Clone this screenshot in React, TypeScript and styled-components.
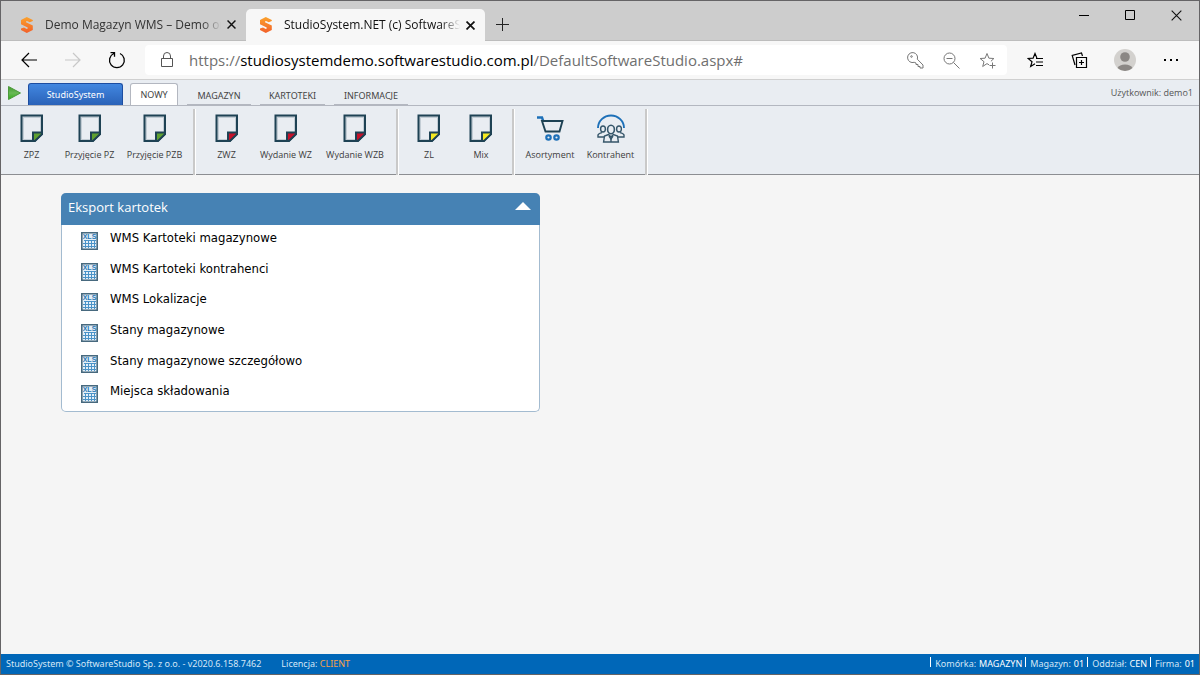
import React from "react";
import styled, { createGlobalStyle, css } from "styled-components";

const uiFont = `"Open Sans", "Noto Sans", sans-serif`;
const wideFont = `"Noto Sans", "Open Sans", sans-serif`;

const GlobalStyle = createGlobalStyle`
  * { box-sizing: border-box; }
  body { margin: 0; background: #f5f5f5; font-family: ${uiFont}; color: #000; }
  button { font: inherit; color: inherit; background: none; border: 0; padding: 0; margin: 0; cursor: pointer; }
  a { color: inherit; text-decoration: none; }
  svg { display: block; flex: none; }
`;

const Window = styled.div`
  min-height: 100vh;
  display: flex;
  flex-direction: column;
  border: 1px solid #656466;
  background: #f5f5f5;
`;

/* Browser chrome */

const TabStrip = styled.header`
  display: flex;
  height: 40px;
  background: #cdcdcd;
  border-bottom: 1px solid #bdbdbd;
`;

const BrowserTab = styled.div<{ $active?: boolean }>`
  display: flex;
  align-items: center;
  width: ${(p) => (p.$active ? 239 : 245)}px;
  padding: 0 7px 0 ${(p) => (p.$active ? 12 : 18)}px;
  font-size: 12px;
  color: #333;
  ${(p) =>
    p.$active
      ? css`
          height: 32px;
          margin: 8px 0 -1px;
          background: #f7f7f7;
          border-radius: 5px 5px 0 0;
          color: #111;
        `
      : css`
          margin-top: 8px;
        `}
`;

const TabTitle = styled.span`
  flex: 1;
  min-width: 0;
  margin-left: 10px;
  overflow: hidden;
  white-space: nowrap;
  line-height: 18px;
  mask-image: linear-gradient(to right, #000 88%, transparent 99%);
`;

const TabClose = styled.button`
  width: 16px;
  height: 16px;
  display: grid;
  place-items: center;
`;

const NewTab = styled.button`
  width: 34px;
  margin-top: 8px;
  display: grid;
  place-items: center;
`;

const WindowButtons = styled.div`
  display: flex;
  margin-left: auto;
`;

const WindowButton = styled.button`
  width: 46px;
  height: 28px;
  display: grid;
  place-items: center;
`;

const NavBar = styled.nav`
  display: flex;
  align-items: center;
  height: 39px;
  padding-right: 6px;
  background: #f7f7f7;
  border-bottom: 1px solid #d0d0d0;
`;

const NavButton = styled.button<{ $w?: number }>`
  width: ${(p) => p.$w ?? 44}px;
  height: 38px;
  display: grid;
  place-items: center;
`;

const AddressBar = styled.div`
  flex: 1;
  min-width: 0;
  display: flex;
  align-items: center;
  height: 30px;
  margin-right: 6px;
  padding: 0 2px 0 15px;
  background: #fff;
  border-radius: 4px;
`;

const Url = styled.div`
  flex: 1;
  min-width: 0;
  margin-left: 15px;
  overflow: hidden;
  white-space: nowrap;
  font-size: 15px;
  line-height: 22px;
  color: #6f6f6f;
  b { font-weight: 400; color: #000; }
`;

/* Application ribbon */

const MenuBar = styled.div`
  display: flex;
  align-items: flex-end;
  height: 26px;
  padding-left: 6px;
  background: #e9edf2;
  border-bottom: 1px solid #b3b7c0;
`;

const RunButton = styled.button`
  align-self: center;
  width: 15px;
  height: 18px;
  margin-right: 6px;
`;

const tabText = css`
  font-family: ${wideFont};
  font-size: 9px;
  line-height: 12px;
  text-align: center;
`;

const BrandTab = styled.button`
  ${tabText}
  width: 95px;
  height: 22px;
  background: linear-gradient(#4287e0, #2a62b8);
  border: 1px solid #1c4da1;
  border-bottom: 0;
  border-radius: 3px 3px 0 0;
  color: #fff;
`;

const MenuTab = styled.button<{ $w: number; $active?: boolean }>`
  ${tabText}
  width: ${(p) => p.$w}px;
  height: 22px;
  margin-left: 7px;
  color: #444;
  ${(p) =>
    p.$active
      ? css`
          background: #fff;
          border: 1px solid #b3b7c0;
          border-bottom: 0;
          border-radius: 3px 3px 0 0;
        `
      : css`
          padding-top: 4px;
          margin-left: 9px;
          border-bottom: 1px solid #b3b7c0;
        `}
`;

const UserInfo = styled.span`
  margin: 0 6px 0 auto;
  align-self: center;
  font-size: 9px;
  line-height: 12px;
  color: #555;
`;

const Ribbon = styled.div`
  display: flex;
  height: 69px;
  padding-top: 3px;
  background: #e9edf2;
`;

const RibbonGroup = styled.div`
  display: flex;
  padding: 0 5px 0 4px;
  border-bottom: 1px solid #8c8e92;
`;

const Separator = styled.div`
  width: 3px;
  background: #c9c9c9;
  border-right: 1px solid #fff;
`;

const RibbonRest = styled.div`
  flex: 1;
  border-bottom: 1px solid #8c8e92;
`;

const RibbonButton = styled.button<{ $w: number }>`
  width: ${(p) => p.$w}px;
  display: flex;
  flex-direction: column;
  align-items: center;
  padding-top: 5px;
  font-size: 9px;
  line-height: 12px;
  color: #3c3c3c;
  white-space: nowrap;
  span { margin-top: 6px; }
`;

/* Content */

const Main = styled.main`
  flex: 1;
  padding: 18px 60px;
`;

const Panel = styled.section`
  width: 40%;
  min-width: 479px;
  background: #fff;
  border: 1px solid #a3bbd0;
  border-top: 0;
  border-radius: 5px;
`;

const PanelHeader = styled.button`
  display: flex;
  justify-content: space-between;
  align-items: center;
  width: calc(100% + 2px);
  height: 32px;
  margin: 0 -1px;
  padding: 0 9px 4px 7px;
  background: #4682b4;
  border-radius: 5px 5px 0 0;
  color: #fff;
  font-size: 13px;
  line-height: 18px;
`;

const LinkList = styled.ul`
  margin: 0;
  padding: 0 0 2px 19px;
  list-style: none;
  display: grid;
  grid-auto-rows: 1fr;
  height: 186px;
`;

const ListLink = styled.a`
  display: flex;
  align-items: flex-start;
  padding-top: 4px;
  gap: 12px;
  font-family: "DejaVu Sans Condensed", "DejaVu Sans", sans-serif;
  font-stretch: condensed;
  font-size: 13px;
  line-height: 18px;
  svg { margin-top: 3px; }
`;

const Footer = styled.footer`
  display: flex;
  align-items: center;
  height: 20px;
  padding: 0 4px 0 5px;
  background: #0067b8;
  color: #d4e6f6;
  font-family: ${wideFont};
  font-size: 9px;
  line-height: 12px;
  white-space: nowrap;
`;

const License = styled.span`
  margin-left: 20px;
  span { color: #f7a04a; }
`;

const Facts = styled.dl`
  display: flex;
  margin: 0 0 0 auto;
`;

const Fact = styled.div`
  display: flex;
  gap: 3px;
  margin-left: 4px;
  padding-left: 4px;
  position: relative;
  &::before {
    content: "";
    position: absolute;
    left: -1px;
    top: -1px;
    height: 10px;
    border-left: 1px solid #fff;
  }
  dd { margin: 0; color: #fff; }
`;

/* Drawings */

const Logo = () => (
  <svg width="16" height="16" viewBox="0 0 16 16" fill="none">
    <defs>
      <linearGradient id="logo" x1="0" y1="0" x2="0" y2="1">
        <stop offset="0" stopColor="#fba22c" />
        <stop offset="1" stopColor="#f2602a" />
      </linearGradient>
    </defs>
    <path
      fill="url(#logo)"
      d="M7.8 0 2 3v4.2l6.7 3.4v1L7.8 12 5 10.4 2 11.6v1.5L7.8 16l6-3V8.600L7 5.300V4.400l1-.5 2.800 1.400 3-1.300V3z"
    />
  </svg>
);

const Cross = ({ size = 9, w = 1.6 }: { size?: number; w?: number }) => (
  <svg width={size} height={size} viewBox="0 0 10 10" stroke="#111" strokeWidth={w}>
    <path d="M.6.6l8.800 8.800M9.400.6.6 9.400" />
  </svg>
);

type NoteProps = { color: string };
const NoteIcon = ({ color }: NoteProps) => (
  <svg width="24" height="29" viewBox="0 0 24 29">
    <path d="M3 3h18v15M3 3v23h10" fill="none" stroke="#c3cdd5" strokeWidth="2" />
    <path d="M1.500 1.500h20.500v18.500L14.500 27H1.500z" fill="none" stroke="#1e4254" strokeWidth="2" />
    <path d="M13 18.500H22v1.700L15 27h-2z" fill={color} stroke="#1e4254" strokeWidth="2" />
  </svg>
);

const CartIcon = () => (
  <svg width="30" height="29" viewBox="0 0 30 29" fill="none" strokeWidth="1.900">
    <path d="M2 3.500h5l1 3" stroke="#1d70b8" strokeWidth="2.400" />
    <path d="M7 7h20.500L24.500 17.500H10.500z" stroke="#1e4254" />
    <circle cx="13.500" cy="23.500" r="2.200" stroke="#1d70b8" strokeWidth="2.200" />
    <circle cx="21.500" cy="23.500" r="2.200" stroke="#1d70b8" strokeWidth="2.200" />
  </svg>
);

const PeopleIcon = () => (
  <svg width="30" height="29" viewBox="0 0 30 29" fill="none" stroke="#36566a" strokeWidth="1.400">
    <path d="M2 14A13 12.500 0 0 1 28 14" stroke="#1d70b8" strokeWidth="1.900" />
    <ellipse cx="7" cy="15" rx="2.400" ry="3" />
    <ellipse cx="23" cy="15" rx="2.400" ry="3" />
    <path d="M8 23H2v-2q.5-1.600 4-2.400M22 23h6v-2q-.5-1.600-4-2.400" />
    <ellipse cx="15" cy="15.500" rx="3.400" ry="4.200" strokeWidth="1.600" />
    <path d="M12.600 20.500 8.500 22 7.600 28h14.800l-.9-6-4.100-1.500L15 23zM15 23v5" />
    <path d="M13 22l2 3 2-3" />
  </svg>
);

const SheetIcon = () => (
  <svg width="17" height="18" viewBox="0 0 17 18">
    <path d="M.8.8h15.400v16.400H.8z" fill="#e4eff7" stroke="#47697e" strokeWidth="1.600" />
    <path d="M3 8.500h12M2 11.500h13M2 14.500h13M4.500 8v8M7.500 8v8M10.500 8v8M13.500 8v8" stroke="#4a93c8" />
    <text x="8.500" y="7" textAnchor="middle" fontFamily="Liberation Sans, sans-serif" fontSize="7" fontWeight="700" fill="#2a78b4">
      XLS
    </text>
  </svg>
);

const notes = { in: "#5fa030", out: "#c4122a", mix: "#f6ea22" };

type Item = { label: string; w: number; icon: React.ReactNode };
const ribbonGroups: Item[][] = [
  [
    { label: "ZPZ", w: 53, icon: <NoteIcon color={notes.in} /> },
    { label: "Przyjęcie PZ", w: 63, icon: <NoteIcon color={notes.in} /> },
    { label: "Przyjęcie PZB", w: 67, icon: <NoteIcon color={notes.in} /> },
  ],
  [
    { label: "ZWZ", w: 53, icon: <NoteIcon color={notes.out} /> },
    { label: "Wydanie WZ", w: 66, icon: <NoteIcon color={notes.out} /> },
    { label: "Wydanie WZB", w: 72, icon: <NoteIcon color={notes.out} /> },
  ],
  [
    { label: "ZL", w: 52, icon: <NoteIcon color={notes.mix} /> },
    { label: "Mix", w: 52, icon: <NoteIcon color={notes.mix} /> },
  ],
  [
    { label: "Asortyment", w: 62, icon: <CartIcon /> },
    { label: "Kontrahent", w: 59, icon: <PeopleIcon /> },
  ],
];

const exportLinks = [
  "WMS Kartoteki magazynowe",
  "WMS Kartoteki kontrahenci",
  "WMS Lokalizacje",
  "Stany magazynowe",
  "Stany magazynowe szczegółowo",
  "Miejsca składowania",
];

const facts = [
  ["Komórka:", "MAGAZYN"],
  ["Magazyn:", "01"],
  ["Oddział:", "CEN"],
  ["Firma:", "01"],
];

export default function App() {
  return (
    <Window>
      <GlobalStyle />
      <TabStrip>
        <BrowserTab>
          <Logo />
          <TabTitle>Demo Magazyn WMS – Demo or</TabTitle>
          <TabClose aria-label="Close tab"><Cross /></TabClose>
        </BrowserTab>
        <BrowserTab $active>
          <Logo />
          <TabTitle>StudioSystem.NET (c) SoftwareSt</TabTitle>
          <TabClose aria-label="Close tab"><Cross w={1.9} /></TabClose>
        </BrowserTab>
        <NewTab aria-label="New tab">
          <svg width="13" height="13" viewBox="0 0 13 13" stroke="#222"><path d="M6.500 0v13M0 6.500h13" /></svg>
        </NewTab>
        <WindowButtons>
          <WindowButton aria-label="Minimize">
            <svg width="10" height="10" viewBox="0 0 10 10" stroke="#000"><path d="M0 5.500h10" /></svg>
          </WindowButton>
          <WindowButton aria-label="Maximize">
            <svg width="10" height="10" viewBox="0 0 10 10" stroke="#000" fill="none"><path d="M.5.5h9v9h-9z" /></svg>
          </WindowButton>
          <WindowButton aria-label="Close"><Cross size={11} w={1} /></WindowButton>
        </WindowButtons>
      </TabStrip>

      <NavBar>
        <NavButton aria-label="Back" $w={56}>
          <svg width="16" height="16" viewBox="0 0 16 16" stroke="#000" fill="none" strokeWidth="1.200"><path d="M16 8H1M8 1 1 8l7 7" /></svg>
        </NavButton>
        <NavButton aria-label="Forward" $w={32}>
          <svg width="16" height="16" viewBox="0 0 16 16" stroke="#c8c8c8" fill="none" strokeWidth="1.200"><path d="M0 8h15M8 1l7 7-7 7" /></svg>
        </NavButton>
        <NavButton aria-label="Refresh" $w={56}>
          <svg width="18" height="18" viewBox="0 0 18 18" stroke="#000" fill="none" strokeWidth="1.300">
            <path d="M12 2.500a7.400 7.400 0 1 1-6.200 0M2.500 1.700h4v4" />
          </svg>
        </NavButton>
        <AddressBar>
          <svg width="14" height="18" viewBox="0 0 14 18" stroke="#555" fill="none">
            <path d="M1.500 7.500h11v8h-11zM3.500 7.500V5a3.500 3.500 0 0 1 7 0v2.500" />
          </svg>
          <Url>
            https://<b>studiosystemdemo.softwarestudio.com.pl</b>/DefaultSoftwareStudio.aspx#
          </Url>
          <NavButton aria-label="Passwords" $w={36}>
            <svg width="17" height="17" viewBox="0 0 17 17" stroke="#777" fill="none">
              <path d="M10.300 7.200A5 5 0 1 0 7.200 10.300l1.800.7v1.500h2V14.500h2v1.500h3v-3z" />
              <circle cx="4.500" cy="4.500" r=".8" />
            </svg>
          </NavButton>
          <NavButton aria-label="Zoom" $w={36}>
            <svg width="17" height="17" viewBox="0 0 17 17" stroke="#777" fill="none">
              <circle cx="6.500" cy="6.500" r="5.500" /><path d="M10.500 10.500l6 6M3.500 6.500h6" />
            </svg>
          </NavButton>
          <NavButton aria-label="Add to favorites" $w={36}>
            <svg width="17" height="17" viewBox="0 0 17 17" stroke="#777" fill="none">
              <path d="M10 12.800 8 11.600l-4.300 2.900L5 9.700 1.100 6.500l5-.3L8 1.500l1.900 4.700 5 .3-3 2.800M13.500 10.500v6M10.500 13.500h6" />
            </svg>
          </NavButton>
        </AddressBar>
        <NavButton aria-label="Favorites">
          <svg width="17" height="17" viewBox="0 0 17 17" stroke="#000" fill="none" strokeWidth="1.200">
            <path d="M8 11.800l-4.300 2.700L5 9.700 1.100 6.500l5-.3L8 1.500l1.900 4.500M9 6.500h7M9 10h7M9 13.500h7" />
          </svg>
        </NavButton>
        <NavButton aria-label="Collections">
          <svg width="17" height="17" viewBox="0 0 17 17" stroke="#000" fill="none" strokeWidth="1.200">
            <path d="M5.500 5.500h10v10h-10zM10.500 8v5M8 10.500h5M4 13 1.200 3.500 10.500 1l1 3" />
          </svg>
        </NavButton>
        <NavButton aria-label="Profile" $w={48}>
          <svg width="22" height="22" viewBox="0 0 22 22">
            <circle cx="11" cy="11" r="11" fill="#d3d1ce" />
            <circle cx="11" cy="8" r="4.800" fill="#8b8784" />
            <path d="M3.500 19a8 5.500 0 0 1 15 0A11 11 0 0 1 3.500 19z" fill="#8b8784" />
          </svg>
        </NavButton>
        <NavButton aria-label="Settings">
          <svg width="16" height="4" viewBox="0 0 16 4"><path d="M1 1h2v2H1zM7 1h2v2H7zM13 1h2v2h-2z" /></svg>
        </NavButton>
      </NavBar>

      <MenuBar>
        <RunButton aria-label="Start">
          <svg width="15" height="16" viewBox="0 0 15 16">
            <defs>
              <linearGradient id="run" x1="0" y1="0" x2="0" y2="1">
                <stop offset="0" stopColor="#3f9a2d" /><stop offset=".5" stopColor="#69b956" /><stop offset="1" stopColor="#2fae16" />
              </linearGradient>
            </defs>
            <path d="M1.500 1.500 13.500 8l-12 6.500z" fill="url(#run)" stroke="#4c9a3c" strokeLinejoin="round" />
          </svg>
        </RunButton>
        <BrandTab>StudioSystem</BrandTab>
        <MenuTab $w={48} $active>NOWY</MenuTab>
        <MenuTab $w={64}>MAGAZYN</MenuTab>
        <MenuTab $w={65}>KARTOTEKI</MenuTab>
        <MenuTab $w={74}>INFORMACJE</MenuTab>
        <UserInfo>Użytkownik: demo1</UserInfo>
      </MenuBar>

      <Ribbon>
        {ribbonGroups.map((group, i) => (
          <React.Fragment key={i}>
            <RibbonGroup>
              {group.map((item) => (
                <RibbonButton key={item.label} $w={item.w}>
                  {item.icon}
                  <span>{item.label}</span>
                </RibbonButton>
              ))}
            </RibbonGroup>
            <Separator />
          </React.Fragment>
        ))}
        <RibbonRest />
      </Ribbon>

      <Main>
        <Panel>
          <PanelHeader aria-expanded="true">
            Eksport kartotek
            <svg width="16" height="10" viewBox="0 0 16 10"><path d="M0 8 8 0l8 8z" fill="#fff" /></svg>
          </PanelHeader>
          <LinkList>
            {exportLinks.map((text) => (
              <li key={text}>
                <ListLink href="#"><SheetIcon />{text}</ListLink>
              </li>
            ))}
          </LinkList>
        </Panel>
      </Main>

      <Footer>
        <span>StudioSystem © SoftwareStudio Sp. z o.o. - v2020.6.158.7462</span>
        <License>Licencja: <span>CLIENT</span></License>
        <Facts>
          {facts.map(([name, value]) => (
            <Fact key={name}><dt>{name}</dt><dd>{value}</dd></Fact>
          ))}
        </Facts>
      </Footer>
    </Window>
  );
}
